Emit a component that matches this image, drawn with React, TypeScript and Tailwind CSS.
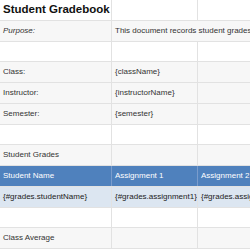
const rows: { cells: string[]; kind: string }[] = [
  { cells: ["Student Gradebook", "", ""], kind: "title" },
  { cells: ["Purpose:", "This document records student grades for each assignment"], kind: "purpose" },
  { cells: ["", "", ""], kind: "blank" },
  { cells: ["Class:", "{className}", ""], kind: "gray" },
  { cells: ["Instructor:", "{instructorName}", ""], kind: "gray" },
  { cells: ["Semester:", "{semester}", ""], kind: "gray" },
  { cells: ["", "", ""], kind: "blank" },
  { cells: ["Student Grades", "", ""], kind: "gray" },
  { cells: ["Student Name", "Assignment 1", "Assignment 2"], kind: "header" },
  { cells: ["{#grades.studentName}", "{#grades.assignment1}", "{#grades.assignment2}"], kind: "data" },
  { cells: ["", "", ""], kind: "blank" },
  { cells: ["Class Average", "", ""], kind: "gray" },
];

const widths = ["w-[112px]", "w-[86px]", "flex-1"];

function rowClass(kind: string) {
  if (kind === "header") return "bg-[#4f81bd] text-white";
  if (kind === "data") return "bg-[#dce6f1] text-[#222]";
  if (kind === "gray" || kind === "purpose") return "bg-[#f7f7f7] text-[#333]";
  return "bg-white text-[#333]";
}

function borderClass(kind: string) {
  if (kind === "header") return "border-[#7a9ccc]";
  return "border-[#e2e2e2]";
}

export default function App() {
  return (
    <div className="w-[250px] h-[250px] overflow-hidden bg-white font-['Liberation_Sans',Arial,sans-serif] text-[8px]">
      {rows.map((row, i) => (
        <div key={i} className={`flex h-[20.75px] border-b border-[#e2e2e2] ${rowClass(row.kind)}`}>
          {row.kind === "purpose" ? (
            <>
              <div className="w-[112px] shrink-0 border-r border-[#e2e2e2] flex items-center pl-[3px] italic">
                {row.cells[0]}
              </div>
              <div className="flex-1 flex items-center pl-[3px] whitespace-nowrap overflow-hidden">
                {row.cells[1]}
              </div>
            </>
          ) : (
            row.cells.map((c, j) => (
              <div
                key={j}
                className={`${widths[j]} shrink-0 flex items-center pl-[3px] whitespace-nowrap overflow-hidden ${
                  j < 2 ? `border-r ${borderClass(row.kind)}` : ""
                } ${row.kind === "title" && j === 0 ? "font-bold text-[11.5px] text-[#111]" : ""}`}
              >
                {c}
              </div>
            ))
          )}
        </div>
      ))}
    </div>
  );
}
